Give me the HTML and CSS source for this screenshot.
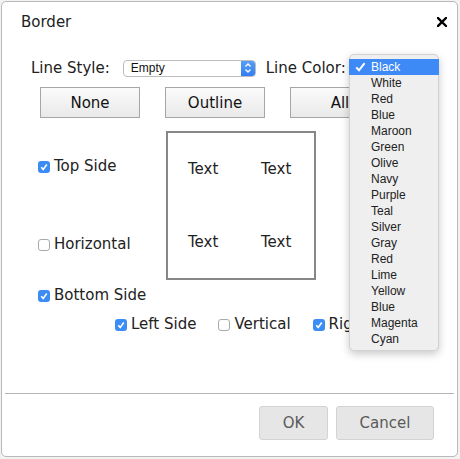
FILE: index.html
```html
<!DOCTYPE html>
<html>
<head>
<meta charset="utf-8">
<link rel="stylesheet" href="styles.css">
</head>
<body>
<div class="dialog">
  <div class="header">
    <div class="title">Border</div>
    <svg class="close" width="10" height="10" viewBox="0 0 10 10"><path d="M1 1 L9 9 M9 1 L1 9" stroke="#000" stroke-width="2.4" stroke-linecap="square"/></svg>
  </div>
  <div class="row-style">
    <span class="label">Line Style:</span>
    <div class="select">
      <span class="select-text">Empty</span>
      <span class="stepper"><svg width="8" height="12" viewBox="0 0 8 12"><path d="M1.5 4.5 L4 2 L6.5 4.5 M1.5 7.5 L4 10 L6.5 7.5" stroke="#fff" stroke-width="1.3" fill="none"/></svg></span>
    </div>
    <span class="label color-label">Line Color:</span>
  </div>
  <div class="row-buttons">
    <button class="btn">None</button>
    <button class="btn">Outline</button>
    <button class="btn">All</button>
  </div>
  <div class="main">
    <div class="left-col">
      <label class="cb-item top"><span class="cb checked"><svg width="12" height="12" viewBox="0 0 12 12"><path d="M3.2 6.3 L5.2 8.4 L8.8 3.6" stroke="#fff" stroke-width="1.6" fill="none"/></svg></span>Top Side</label>
      <label class="cb-item horiz"><span class="cb"></span>Horizontal</label>
    </div>
    <div class="preview">
      <span>Text</span><span>Text</span>
      <span>Text</span><span>Text</span>
    </div>
  </div>
  <label class="cb-item bottom"><span class="cb checked"><svg width="12" height="12" viewBox="0 0 12 12"><path d="M3.2 6.3 L5.2 8.4 L8.8 3.6" stroke="#fff" stroke-width="1.6" fill="none"/></svg></span>Bottom Side</label>
  <div class="row-sides">
    <label class="cb-item"><span class="cb checked"><svg width="12" height="12" viewBox="0 0 12 12"><path d="M3.2 6.3 L5.2 8.4 L8.8 3.6" stroke="#fff" stroke-width="1.6" fill="none"/></svg></span>Left Side</label>
    <label class="cb-item"><span class="cb"></span>Vertical</label>
    <label class="cb-item"><span class="cb checked"><svg width="12" height="12" viewBox="0 0 12 12"><path d="M3.2 6.3 L5.2 8.4 L8.8 3.6" stroke="#fff" stroke-width="1.6" fill="none"/></svg></span>Right Side</label>
  </div>
  <div class="footer">
    <button class="fbtn ok">OK</button>
    <button class="fbtn cancel">Cancel</button>
  </div>
</div>
<div class="menu">
  <div class="item selected"><svg class="check" width="11" height="10" viewBox="0 0 11 10"><path d="M1.2 5.4 L4 8.3 L9.6 1.2" stroke="#fff" stroke-width="2" fill="none"/></svg>Black</div>
  <div class="item">White</div>
  <div class="item">Red</div>
  <div class="item">Blue</div>
  <div class="item">Maroon</div>
  <div class="item">Green</div>
  <div class="item">Olive</div>
  <div class="item">Navy</div>
  <div class="item">Purple</div>
  <div class="item">Teal</div>
  <div class="item">Silver</div>
  <div class="item">Gray</div>
  <div class="item">Red</div>
  <div class="item">Lime</div>
  <div class="item">Yellow</div>
  <div class="item">Blue</div>
  <div class="item">Magenta</div>
  <div class="item">Cyan</div>
</div>
</body>
</html>
```
FILE: styles.css
```css
html, body {
  margin: 0;
  padding: 0;
}
body {
  background: #f2f2f2;
  width: 460px;
  height: 459px;
  overflow: hidden;
  position: relative;
  font-family: "DejaVu Sans", sans-serif;
  font-size: 15px;
  color: #222;
}
.dialog {
  box-sizing: border-box;
  margin: 1px 0 0 1px;
  width: 457px;
  height: 456px;
  border: 1px solid #b9b9b9;
  border-radius: 5px;
  background: #fff;
  display: flex;
  flex-direction: column;
}
.header {
  display: flex;
  justify-content: space-between;
  align-items: flex-start;
  padding: 11px 10px 0 19px;
  line-height: 18px;
}
.close {
  margin-top: 4px;
}
.row-style {
  display: flex;
  align-items: center;
  height: 20px;
  line-height: 20px;
  margin-top: 27px;
  padding-left: 29px;
}
.select {
  box-sizing: border-box;
  width: 133px;
  height: 17px;
  margin-left: 13px;
  border: 1px solid #bdbdbd;
  border-radius: 4px;
  display: flex;
  align-items: center;
  justify-content: space-between;
  overflow: hidden;
  background: #fff;
}
.select-text {
  font-family: "Liberation Sans", Arial, sans-serif;
  font-size: 12px;
  color: #111;
  padding-left: 7px;
  line-height: 15px;
}
.stepper {
  width: 15px;
  height: 17px;
  margin-right: -1px;
  background: linear-gradient(#5aa0f8, #2f7cf0);
  display: flex;
  align-items: center;
  justify-content: center;
  border-radius: 0 4px 4px 0;
}
.color-label {
  margin-left: 10px;
}
.row-buttons {
  display: flex;
  gap: 25px;
  margin-top: 9px;
  padding-left: 38px;
}
.btn {
  box-sizing: border-box;
  width: 100px;
  height: 31px;
  border: 1px solid #a6a6a6;
  border-radius: 0;
  background: linear-gradient(#fbfbfb, #e9e9e9);
  font-family: "DejaVu Sans", sans-serif;
  font-size: 15px;
  color: #111;
  padding: 0;
}
.main {
  display: flex;
  margin-top: 13px;
  padding-left: 36px;
}
.left-col {
  width: 128px;
  display: flex;
  flex-direction: column;
}
.cb-item {
  display: flex;
  align-items: center;
  line-height: 18px;
  height: 18px;
  white-space: nowrap;
}
.cb {
  box-sizing: border-box;
  width: 12px;
  height: 12px;
  margin-right: 4px;
  margin-top: 2px;
  border: 1px solid #a9a9a9;
  border-radius: 3px;
  background: #fff;
  display: flex;
  flex-shrink: 0;
}
.cb.checked {
  border: none;
  background: #3b8cf5;
}
.top {
  margin-top: 26px;
}
.horiz {
  margin-top: 60px;
}
.preview {
  box-sizing: border-box;
  width: 150px;
  height: 149px;
  border: 2px solid #878787;
  display: grid;
  grid-template-columns: 73px 73px;
  grid-auto-rows: 73px;
  padding: 27px 0 0 20px;
  line-height: 18px;
  align-content: start;
}
.bottom {
  margin-top: 6px;
  margin-left: 36px;
}
.row-sides {
  display: flex;
  gap: 22px;
  margin-top: 11px;
  padding-left: 113px;
}
.footer {
  margin: auto 3px 0 3px;
  border-top: 1px solid #b5b5b5;
  padding: 12px 20px 16px 0;
  display: flex;
  justify-content: flex-end;
  gap: 8px;
}
.fbtn {
  box-sizing: border-box;
  height: 34px;
  border: 1px solid #d3d3d3;
  border-radius: 3px;
  background: #e6e6e6;
  font-family: "DejaVu Sans", sans-serif;
  font-size: 15px;
  color: #5a5a5a;
  padding: 0;
}
.ok {
  width: 69px;
}
.cancel {
  width: 98px;
}
.menu {
  position: absolute;
  left: 349px;
  top: 54px;
  width: 90px;
  height: 297px;
  box-sizing: border-box;
  padding-top: 4px;
  background: #efefef;
  border: 1px solid #d2d2d2;
  border-radius: 5px;
  box-shadow: 0 3px 9px rgba(0, 0, 0, 0.22);
  font-family: "Liberation Sans", Arial, sans-serif;
  font-size: 12px;
  color: #222;
}
.item {
  height: 16px;
  line-height: 16px;
  padding-left: 21px;
  position: relative;
}
.item.selected {
  background: #3d89f6;
  color: #fff;
  margin: 0 -1px;
  padding-left: 22px;
}
.check {
  position: absolute;
  left: 6px;
  top: 3px;
}
```
